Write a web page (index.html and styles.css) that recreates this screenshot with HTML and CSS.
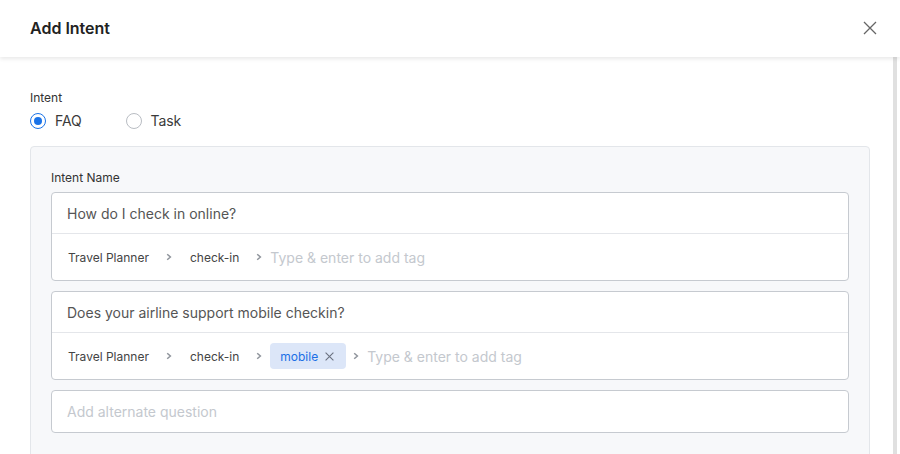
FILE: index.html
```html
<!DOCTYPE html>
<html lang="en">
<head>
<meta charset="utf-8">
<title>Add Intent</title>
<link rel="stylesheet" href="styles.css">
</head>
<body>
<div class="modal">
  <header class="modal-header">
    <h1 class="modal-title">Add Intent</h1>
    <button class="close-btn" aria-label="Close">
      <svg width="14" height="14" viewBox="0 0 14 14"><path d="M1 1L13 13M13 1L1 13" stroke="#666" stroke-width="1.3" fill="none"/></svg>
    </button>
  </header>
  <div class="modal-body">
    <main class="content">
      <div class="field-label">Intent</div>
      <div class="radio-group">
        <label class="radio"><span class="radio-circle checked"></span><span class="radio-text">FAQ</span></label>
        <label class="radio"><span class="radio-circle"></span><span class="radio-text">Task</span></label>
      </div>
      <section class="panel">
        <div class="panel-label">Intent Name</div>
        <div class="qbox">
          <div class="qrow">How do I check in online?</div>
          <div class="tagrow">
            <span class="tag">Travel Planner</span>
            <svg class="chev" width="6" height="8" viewBox="0 0 6 8"><path d="M1.2 1.2L4.4 4L1.2 6.8" stroke="#8f949c" stroke-width="1.5" fill="none"/></svg>
            <span class="tag">check-in</span>
            <svg class="chev" width="6" height="8" viewBox="0 0 6 8"><path d="M1.2 1.2L4.4 4L1.2 6.8" stroke="#8f949c" stroke-width="1.5" fill="none"/></svg>
            <span class="placeholder">Type &amp; enter to add tag</span>
          </div>
        </div>
        <div class="qbox">
          <div class="qrow">Does your airline support mobile checkin?</div>
          <div class="tagrow">
            <span class="tag">Travel Planner</span>
            <svg class="chev" width="6" height="8" viewBox="0 0 6 8"><path d="M1.2 1.2L4.4 4L1.2 6.8" stroke="#8f949c" stroke-width="1.5" fill="none"/></svg>
            <span class="tag">check-in</span>
            <svg class="chev" width="6" height="8" viewBox="0 0 6 8"><path d="M1.2 1.2L4.4 4L1.2 6.8" stroke="#8f949c" stroke-width="1.5" fill="none"/></svg>
            <span class="tag tag-active">mobile<svg class="tag-x" width="9" height="9" viewBox="0 0 9 9"><path d="M0.6 0.6L8.4 8.4M8.4 0.6L0.6 8.4" stroke="#6b7280" stroke-width="1.1" fill="none"/></svg></span>
            <svg class="chev" width="6" height="8" viewBox="0 0 6 8"><path d="M1.2 1.2L4.4 4L1.2 6.8" stroke="#8f949c" stroke-width="1.5" fill="none"/></svg>
            <span class="placeholder">Type &amp; enter to add tag</span>
          </div>
        </div>
        <div class="qbox single">
          <div class="qrow placeholder">Add alternate question</div>
        </div>
      </section>
    </main>
    <div class="scrollbar"></div>
  </div>
</div>
</body>
</html>
```
FILE: styles.css
```css
* { box-sizing: border-box; }
html, body { margin: 0; padding: 0; }
body {
  width: 900px;
  height: 454px;
  overflow: hidden;
  background: #fff;
  font-family: Inter, "Noto Sans", sans-serif;
  color: #333;
}
.modal { display: flex; flex-direction: column; height: 454px; }
.modal-header {
  position: relative;
  z-index: 2;
  height: 57px;
  flex: none;
  display: flex;
  align-items: center;
  justify-content: space-between;
  padding: 0 23px 0 30px;
  background: #fff;
  box-shadow: 0 2px 4px rgba(0,0,0,0.09);
}
.modal-title {
  margin: 0;
  font-size: 16px;
  font-weight: 600;
  color: #222;
  line-height: 20px;
  padding-bottom: 2px;
}
.close-btn {
  border: 0;
  background: none;
  padding: 0;
  width: 14px;
  height: 14px;
  display: flex;
  margin-bottom: 1px;
}
.modal-body { flex: 1; display: flex; min-height: 0; }
.content { flex: 1; padding: 33px 23px 0 30px; }
.scrollbar { width: 4px; background: #e0e0e0; margin-right: 3px; flex: none; }
.field-label { font-size: 12px; line-height: 16px; color: #333; }
.radio-group { display: flex; gap: 44px; margin-top: 7px; height: 16px; }
.radio { display: flex; align-items: center; gap: 9px; }
.radio-circle {
  width: 16px; height: 16px; border-radius: 50%;
  border: 1px solid #b9bdc3; background: #fff;
  display: flex; align-items: center; justify-content: center;
}
.radio-circle.checked { border: 1.5px solid #1a73e8; }
.radio-circle.checked::after {
  content: ""; width: 8px; height: 8px; border-radius: 50%; background: #1a73e8;
}
.radio-text { font-size: 14px; line-height: 16px; color: #3a3a3a; letter-spacing: -0.1px; }
.panel {
  margin-top: 17px;
  background: #f7f8fa;
  border: 1px solid #e3e6ea;
  border-radius: 4px;
  padding: 23px 20px 40px;
}
.panel-label { font-size: 12px; line-height: 16px; color: #333; margin-bottom: 6px; }
.qbox {
  background: #fff;
  border: 1px solid #c6cad0;
  border-radius: 4px;
  margin-bottom: 10px;
}
.qrow {
  height: 41px;
  display: flex;
  align-items: center;
  padding: 0 15px;
  font-size: 14px;
  color: #555;
  border-bottom: 1px solid #e4e6ea;
}
.qbox.single .qrow { height: 41px; border-bottom: 0; }
.tagrow {
  height: 46px;
  display: flex;
  align-items: center;
  padding: 0 6px;
  font-size: 14px;
}
.tag {
  font-size: 12px;
  color: #444;
  padding: 0 10px;
  height: 26px;
  display: flex;
  align-items: center;
  border-radius: 4px;
}
.tag-active { background: #dce6f8; color: #1a6fe6; padding: 0 12px 0 10px; gap: 7px; }
.tag-x { flex: none; }
.chev { flex: none; margin: 0 8px 0 7px; }
.placeholder { color: #c4c8ce; font-size: 14px; }
```
